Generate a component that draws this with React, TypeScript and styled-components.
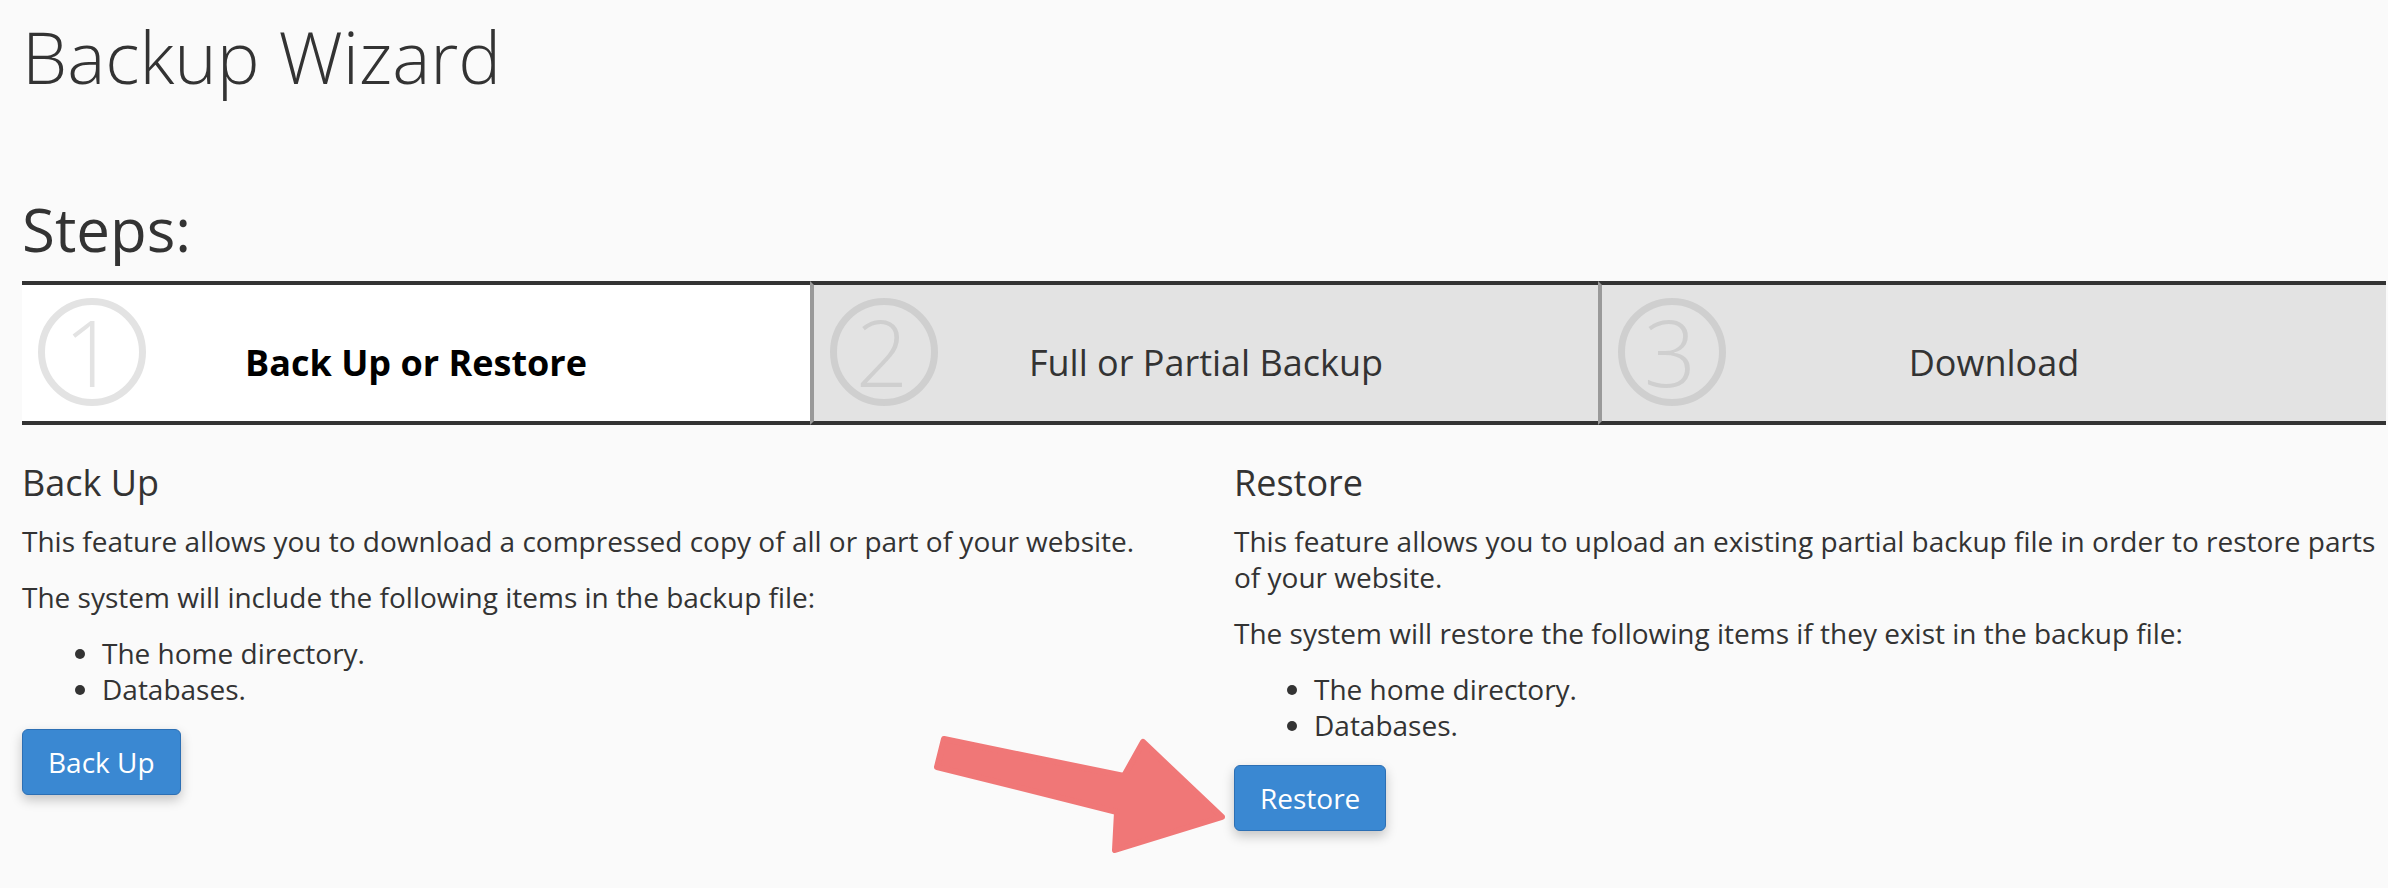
import styled, { createGlobalStyle } from "styled-components";

const GlobalStyle = createGlobalStyle`
  html, body {
    margin: 0;
    padding: 0;
    background: #fafafa;
  }
  body {
    font-family: "Open Sans", "Liberation Sans", sans-serif;
    color: #333;
  }
  * {
    box-sizing: border-box;
  }
`;

type Step = { num: number; label: string; active?: boolean };

const steps: Step[] = [
  { num: 1, label: "Back Up or Restore", active: true },
  { num: 2, label: "Full or Partial Backup" },
  { num: 3, label: "Download" },
];

function App() {
  return (
    <Page>
      <GlobalStyle />
      <Title>Backup Wizard</Title>
      <StepsHeading>Steps:</StepsHeading>

      <Stepper>
        {steps.map((step, i) => (
          <StepItem key={step.num} $active={step.active} $first={i === 0}>
            <Badge $active={step.active}>{step.num}</Badge>
            <StepLabel $active={step.active}>{step.label}</StepLabel>
          </StepItem>
        ))}
      </Stepper>

      <Columns>
        <Section>
          <SectionTitle>Back Up</SectionTitle>
          <Text>
            This feature allows you to download a compressed copy of all or
            part of your website.
          </Text>
          <Text>The system will include the following items in the backup file:</Text>
          <Items>
            <li>The home directory.</li>
            <li>Databases.</li>
          </Items>
          <Button>Back Up</Button>
        </Section>

        <Section>
          <SectionTitle>Restore</SectionTitle>
          <Text>
            This feature allows you to upload an existing partial backup file in
            order to restore parts of your website.
          </Text>
          <Text>
            The system will restore the following items if they exist in the
            backup file:
          </Text>
          <Items>
            <li>The home directory.</li>
            <li>Databases.</li>
          </Items>
          <Button>Restore</Button>
        </Section>
      </Columns>

      {/* annotation arrow pointing at the Restore button */}
      <Arrow width="320" height="140" viewBox="0 0 320 140">
        <polygon
          points="24,13 17,41 197,86 195,124 302,91 223,16 204,50"
          fill="#f07777"
          stroke="#f07777"
          strokeWidth="6"
          strokeLinejoin="round"
        />
      </Arrow>
    </Page>
  );
}
export default App;

const Page = styled.div`
  position: relative;
  min-height: 888px;
  padding: 0 2px 0 22px;
`;

const Title = styled.h1`
  margin: 16px 0 0;
  font-size: 72px;
  line-height: 80px;
  font-weight: 300;
  color: #333;
`;

const StepsHeading = styled.h2`
  margin: 100px 0 19px;
  font-size: 60px;
  line-height: 66px;
  font-weight: 500;
  color: #333;
`;

const Stepper = styled.div`
  display: grid;
  grid-template-columns: repeat(3, 1fr);
`;

const StepItem = styled.div<{ $active?: boolean; $first?: boolean }>`
  position: relative;
  height: 144px;
  display: flex;
  align-items: center;
  justify-content: center;
  padding-top: 20px;
  background: ${(p) => (p.$active ? "#fff" : "#e3e3e3")};
  border-top: 4px solid #333;
  border-bottom: 4px solid #333;
  border-left: ${(p) => (p.$first ? "none" : "4px solid #9a9a9a")};
`;

const Badge = styled.div<{ $active?: boolean }>`
  position: absolute;
  left: 16px;
  top: 13px;
  width: 108px;
  height: 108px;
  border-radius: 50%;
  border: 7px solid ${(p) => (p.$active ? "#e3e3e3" : "#cfcfcf")};
  display: flex;
  align-items: center;
  justify-content: center;
  padding-right: 4px;
  font-size: 92px;
  line-height: 94px;
  font-weight: 300;
  color: ${(p) => (p.$active ? "#e3e3e3" : "#cfcfcf")};
`;

const StepLabel = styled.span<{ $active?: boolean }>`
  position: relative;
  font-size: 36px;
  line-height: 50px;
  font-weight: ${(p) => (p.$active ? 700 : 400)};
  color: ${(p) => (p.$active ? "#000" : "#333")};
`;

const Columns = styled.div`
  display: grid;
  grid-template-columns: 1fr 1fr;
  column-gap: 60px;
`;

const Section = styled.section`
  display: flex;
  flex-direction: column;
  align-items: flex-start;
`;

const SectionTitle = styled.h3`
  margin: 38px 0 20px;
  font-size: 36px;
  line-height: 40px;
  font-weight: 500;
  color: #333;
`;

const Text = styled.p`
  margin: 0 0 20px;
  font-size: 28px;
  line-height: 36px;
`;

const Items = styled.ul`
  margin: 0 0 22px;
  padding-left: 80px;
  font-size: 28px;
  line-height: 36px;
`;

const Button = styled.button`
  font-family: "Open Sans", "Liberation Sans", sans-serif;
  font-size: 28px;
  line-height: 40px;
  padding: 12px 25px;
  color: #fff;
  background: #3a88d2;
  border: 1px solid #2c6fb4;
  border-radius: 6px;
  box-shadow: 0 5px 12px rgba(0, 0, 0, 0.22);
  cursor: pointer;
`;

const Arrow = styled.svg`
  position: absolute;
  left: 920px;
  top: 710px;
  pointer-events: none;
`;
